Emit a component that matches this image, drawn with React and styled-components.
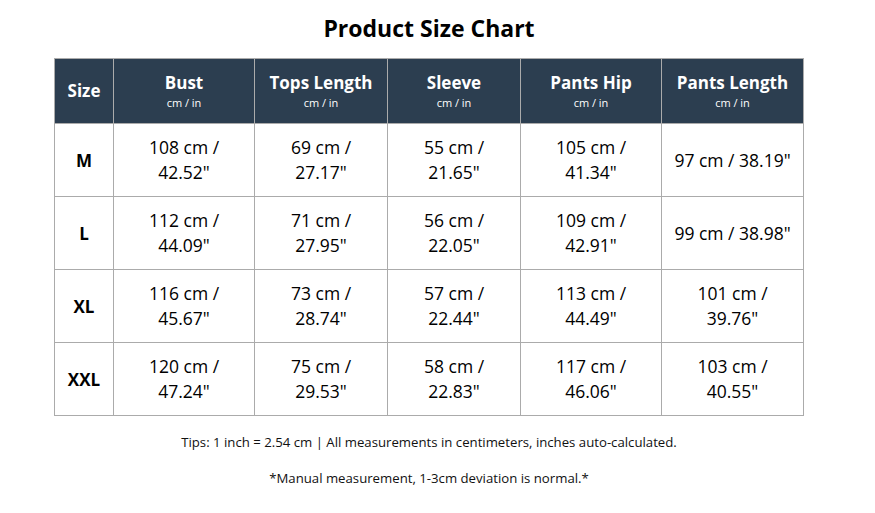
import React from "react";
import styled, { createGlobalStyle } from "styled-components";

const GlobalStyle = createGlobalStyle`
  html, body { margin: 0; padding: 0; background: #fff; }
  body { font-family: "Open Sans", "Noto Sans", sans-serif; color: #000; }
`;

const Page = styled.div`
  width: 858px;
`;

const Container = styled.div`
  max-width: 750px;
  margin: 0 auto;
`;

const Title = styled.h2`
  margin: 13px 0 15px;
  font-size: 23px;
  line-height: 30px;
  font-weight: 700;
  text-align: center;
  color: #000;
`;

const Table = styled.table`
  width: 749px;
  border-collapse: collapse;
  table-layout: fixed;
  border: 1px solid #ababab;
`;

const HeadCell = styled.th`
  background: #2c3e50;
  color: #fff;
  height: 64px;
  padding: 0 4px;
  border: 1px solid #ababab;
  text-align: center;
  vertical-align: middle;
  font-weight: 700;
  font-size: 17px;
  line-height: 22px;
`;

const HeadName = styled.div`
  font-size: 17px;
  line-height: 22px;
  font-weight: 700;
`;

const HeadUnit = styled.div`
  margin-top: 2px;
  font-size: 11px;
  line-height: 14px;
  font-weight: 400;
`;

const Cell = styled.td`
  height: 72px;
  padding: 0 6px;
  border: 1px solid #ababab;
  text-align: center;
  vertical-align: middle;
  font-size: ${(p) => (p.$size ? "17px" : "17.5px")};
  font-weight: ${(p) => (p.$size ? 700 : 400)};
  line-height: 25px;
  color: #000;
`;

const Line = styled.span`
  display: block;
  white-space: nowrap;
`;

const Footer = styled.div`
  margin-top: 16px;
  text-align: center;
`;

const Note = styled.p`
  margin: 0 0 16px;
  font-size: 13.2px;
  line-height: 20px;
  color: #111;
`;

const columns = [
  { name: "Size", width: 59 },
  { name: "Bust", width: 141, unit: true },
  { name: "Tops Length", width: 133, unit: true },
  { name: "Sleeve", width: 133, unit: true },
  { name: "Pants Hip", width: 141, unit: true },
  { name: "Pants Length", width: 142, unit: true },
];

const rows = [
  { size: "M", values: [[108, "42.52"], [69, "27.17"], [55, "21.65"], [105, "41.34"], [97, "38.19", true]] },
  { size: "L", values: [[112, "44.09"], [71, "27.95"], [56, "22.05"], [109, "42.91"], [99, "38.98", true]] },
  { size: "XL", values: [[116, "45.67"], [73, "28.74"], [57, "22.44"], [113, "44.49"], [101, "39.76"]] },
  { size: "XXL", values: [[120, "47.24"], [75, "29.53"], [58, "22.83"], [117, "46.06"], [103, "40.55"]] },
];

function Measure({ cm, inch, single }) {
  if (single) return <Line>{`${cm} cm / ${inch}"`}</Line>;
  return (
    <>
      <Line>{`${cm} cm /`}</Line>
      <Line>{`${inch}"`}</Line>
    </>
  );
}

export default function App() {
  return (
    <Page>
      <GlobalStyle />
      <Container>
        <Title>Product Size Chart</Title>
        <Table>
          <colgroup>
            {columns.map((c) => (
              <col key={c.name} style={{ width: c.width }} />
            ))}
          </colgroup>
          <thead>
            <tr>
              {columns.map((c) => (
                <HeadCell key={c.name}>
                  <HeadName>{c.name}</HeadName>
                  {c.unit && <HeadUnit>cm / in</HeadUnit>}
                </HeadCell>
              ))}
            </tr>
          </thead>
          <tbody>
            {rows.map((r) => (
              <tr key={r.size}>
                <Cell $size>{r.size}</Cell>
                {r.values.map(([cm, inch, single], i) => (
                  <Cell key={i}>
                    <Measure cm={cm} inch={inch} single={single} />
                  </Cell>
                ))}
              </tr>
            ))}
          </tbody>
        </Table>
        <Footer>
          <Note>Tips: 1 inch = 2.54 cm | All measurements in centimeters, inches auto-calculated.</Note>
          <Note>*Manual measurement, 1-3cm deviation is normal.*</Note>
        </Footer>
      </Container>
    </Page>
  );
}
